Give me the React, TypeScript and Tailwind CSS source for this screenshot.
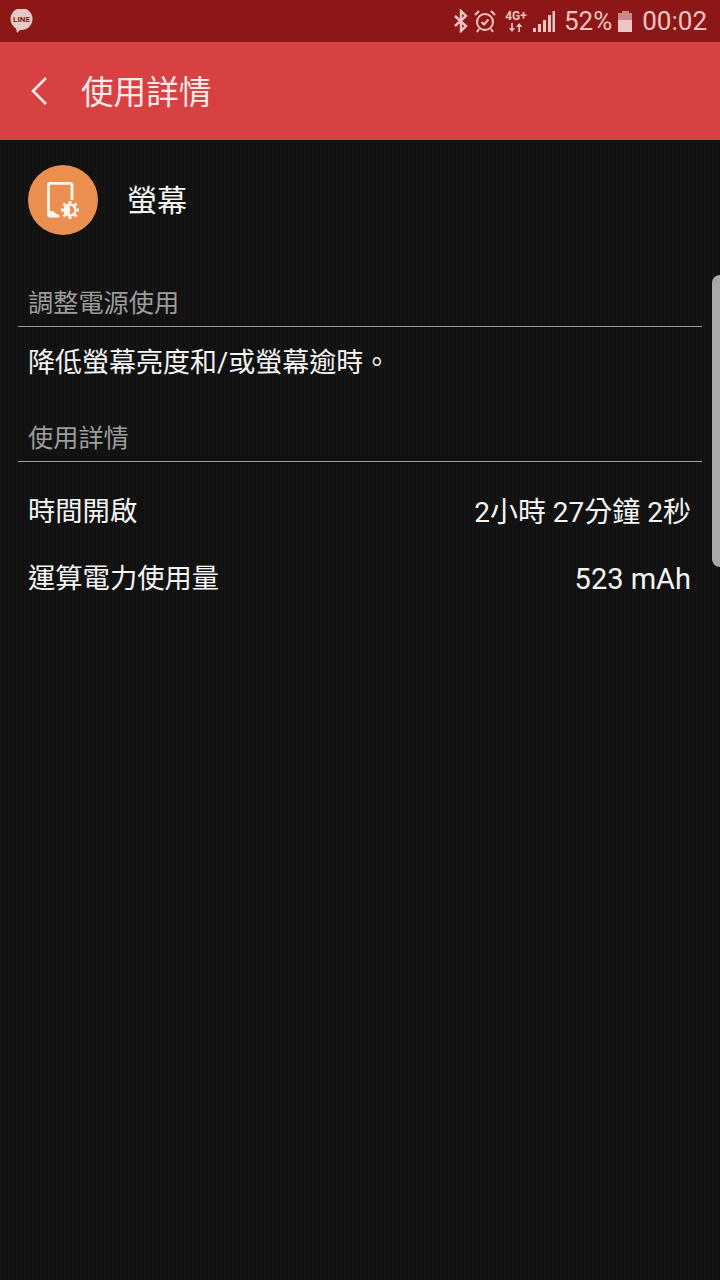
const cjk = "font-['Roboto','Noto_Sans_CJK_TC',sans-serif]";

function DetailRow({ label, value, valueClass }: { label: string; value: string; valueClass: string }) {
  return (
    <div className="flex h-[67px] items-center justify-between pl-[28px] pr-[29px] text-[#f5f5f5]">
      <span className="text-[27.3px]">{label}</span>
      <span className={valueClass}>{value}</span>
    </div>
  );
}

function SectionHeader({ title }: { title: string }) {
  return (
    <div className="mx-[18px] h-[42px] border-b border-[#9a9a9a] pl-[10px] text-[25.2px] leading-[38px] text-[#9c9c9c]">
      {title}
    </div>
  );
}

export default function App() {
  return (
    <div className={`relative h-[1280px] w-[720px] overflow-hidden bg-[#121212] bg-[repeating-linear-gradient(90deg,#131313_0px,#131313_2px,#111111_2px,#111111_4px)] ${cjk}`}>
      {/* status bar */}
      <div className="flex h-[42px] items-center justify-between bg-[#8c1716] pl-[10px] pr-[13px] text-[#eec5c3]">
        <svg width="24" height="24" viewBox="0 0 24 24">
          <circle cx="11.5" cy="10" r="11" fill="#e6c8c6" />
          <path d="M6 19 L12 19 L7 24 Z" fill="#e6c8c6" />
          <text x="11.5" y="13" textAnchor="middle" fontSize="8" fontWeight="700" fill="#8c1716" fontFamily="Roboto">LINE</text>
        </svg>
        <div className="flex items-center font-['Roboto',sans-serif] text-[26px]">
          <svg width="16" height="24" viewBox="0 0 16 24" fill="none" stroke="currentColor" strokeWidth="2.4">
            <path d="M2 7 L13 17 L8 22 V2 L13 7 L2 17" />
          </svg>
          <svg className="ml-[4px]" width="24" height="24" viewBox="0 0 24 24" fill="none" stroke="currentColor" strokeWidth="2">
            <circle cx="12" cy="13" r="8" />
            <path d="M8.5 13 L11 15.5 L15.5 10.5 M2 6 L6 2 M18 2 L22 6 M6 20 L4 23 M18 20 L20 23" />
          </svg>
          <div className="ml-[7px] flex w-[24px] flex-col items-center leading-none">
            <span className="text-[12px] font-bold leading-[13px]">4G+</span>
            <svg width="14" height="9" viewBox="0 0 14 9" fill="currentColor">
              <path d="M2.2 0h1.6v5H6L3 9 0 5h2.2z M10.2 0 L13.5 4 H11 V9 H9.4 V4 H7z" />
            </svg>
          </div>
          <svg className="ml-[5px]" width="22" height="22" viewBox="0 0 22 22" fill="currentColor">
            <path d="M0 18h3v4H0z M5 14h3v8H5z M10 10h3v12h-3z M15 5h3v17h-3z M19.5 1H22v21h-2.5z" />
          </svg>
          <span className="ml-[9px]">52%</span>
          <div className="ml-[6px] flex h-[21px] w-[14px] flex-col">
            <div className="mx-auto h-[2px] w-[7px] bg-[#c98a88]" />
            <div className="h-[7px] bg-[#c98a88]" />
            <div className="flex-1 bg-[#eec5c3]" />
          </div>
          <span className="ml-[10px]">00:02</span>
        </div>
      </div>

      {/* app bar */}
      <div className="flex h-[98px] items-center bg-[#d84141]">
        <svg className="ml-[30px]" width="18" height="30" viewBox="0 0 18 30" fill="none" stroke="#fbeaea" strokeWidth="2.6">
          <path d="M16 2 L3 15 L16 28" />
        </svg>
        <span className="ml-[33px] pt-[4px] text-[32.6px] text-[#fbeaea]">使用詳情</span>
      </div>

      {/* usage item */}
      <div className="flex items-center pl-[28px] pt-[25px]">
        <div className="size-[70px] rounded-full bg-[#ea8f50]">
          <svg width="70" height="70" viewBox="0 0 70 70" fill="none" stroke="#fff6ee" strokeWidth="2.8">
            <path d="M31 51 H22 a1.5 1.5 0 0 1 -1.5 -1.5 V19.8 a1.5 1.5 0 0 1 1.5 -1.5 H42.5 a1.5 1.5 0 0 1 1.5 1.5 V35" />
            <path d="M20 46 H25 L32 52 H20 Z" fill="#fff6ee" stroke="none" />
            <circle cx="42" cy="45" r="5.5" strokeWidth="2.4" />
            <path d="M42 39.5 a5.5 5.5 0 0 0 0 11 Z" fill="#fff6ee" stroke="none" />
            <path d="M42 36 V38.5 M42 51.5 V54 M33 45 H35.5 M48.5 45 H51 M35.6 38.6 L37.4 40.4 M48.4 38.6 L46.6 40.4 M35.6 51.4 L37.4 49.6 M48.4 51.4 L46.6 49.6" strokeWidth="2.8" />
          </svg>
        </div>
        <span className="ml-[29px] text-[30px] text-[#f5f5f5]">螢幕</span>
      </div>

      <div className="mt-[50px]">
        <SectionHeader title="調整電源使用" />
      </div>
      <div className="flex h-[72px] items-center pl-[28px] text-[27px] text-[#f5f5f5]">降低螢幕亮度和/或螢幕逾時。</div>

      <div className="mt-[21px]">
        <SectionHeader title="使用詳情" />
      </div>
      <div className="pt-[17px]">
        <DetailRow label="時間開啟" value="2小時 27分鐘 2秒" valueClass="text-[28px]" />
        <DetailRow label="運算電力使用量" value="523 mAh" valueClass="text-[29px]" />
      </div>

      {/* edge handle */}
      <div className="absolute right-0 top-[275px] h-[292px] w-[8px] rounded-l-[8px] bg-[#a9a9a9]" />
    </div>
  );
}
